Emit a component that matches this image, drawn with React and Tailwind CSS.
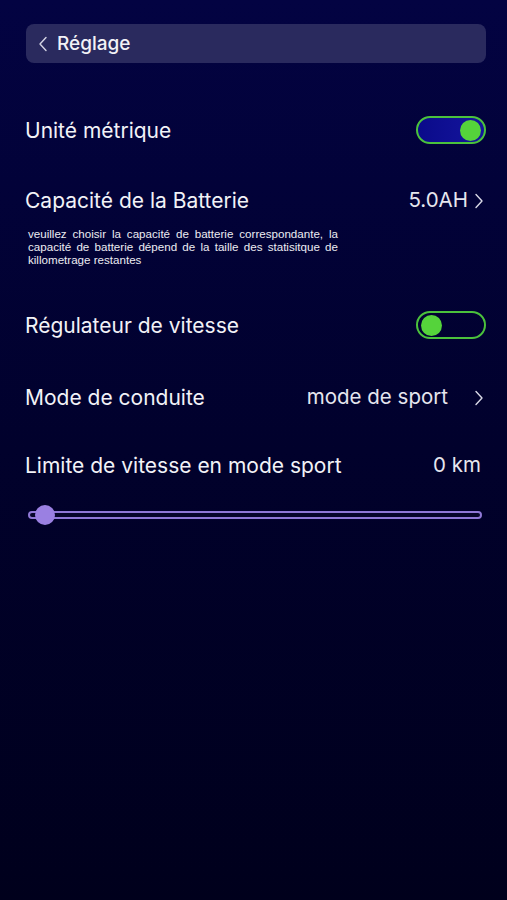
import React, { useState } from 'react';

const Toggle = ({ on, onChange }) => (
  <button
    onClick={() => onChange(!on)}
    className={`flex h-[28px] w-[70px] items-center rounded-full border-2 border-[#4bc23c] px-[3px] ${
      on ? 'justify-end bg-gradient-to-r from-[#0a0a8a] to-[#15159e]' : 'justify-start bg-transparent'
    }`}
  >
    <span className="block h-[21px] w-[21px] rounded-full bg-[#55d33b]" />
  </button>
);

const Chevron = () => (
  <svg width="10" height="16" viewBox="0 0 10 16" fill="none" className="text-[#d9d9e6]">
    <path d="M2 1.5 L8 8 L2 14.5" stroke="currentColor" strokeWidth="1.4" strokeLinecap="round" strokeLinejoin="round" />
  </svg>
);

export default function App() {
  const [metric, setMetric] = useState(true);
  const [cruise, setCruise] = useState(false);
  const [limit, setLimit] = useState(0);

  return (
    <div
      className="min-h-[900px] w-full bg-gradient-to-b from-[#030342] via-[#01012c] to-[#00001c] pl-[26px] pr-[21px] pt-[24px] text-[#f2f2f7]"
      style={{ fontFamily: 'Inter, "Open Sans", sans-serif' }}
    >
      {/* header */}
      <div className="flex h-[39px] items-center gap-[9px] rounded-[8px] bg-[#2a2a5e] pl-[12px]">
        <svg width="10" height="16" viewBox="0 0 10 16" fill="none" className="text-[#d5d5e4]">
          <path d="M8 1.5 L2 8 L8 14.5" stroke="currentColor" strokeWidth="1.4" strokeLinecap="round" strokeLinejoin="round" />
        </svg>
        <span className="text-[19px] font-medium leading-none">Réglage</span>
      </div>

      <div className="mt-[53px] flex items-center justify-between">
        <span className="-ml-[1px] text-[21px] leading-none">Unité métrique</span>
        <Toggle on={metric} onChange={setMetric} />
      </div>

      <div className="mt-[46px] flex items-center justify-between">
        <span className="-ml-[1px] text-[21px] leading-none">Capacité de la Batterie</span>
        <div className="flex items-center gap-[6px] pr-[2px]">
          <span className="text-[20.5px] leading-none text-[#e6e6ee]">5.0AH</span>
          <Chevron />
        </div>
      </div>
      <p
        className="ml-[2px] mt-[16px] w-[310px] text-justify text-[11.6px] leading-[13px] text-[#ececf2]"
        style={{ fontFamily: '"Liberation Sans", Arial, sans-serif' }}
      >
        veuillez choisir la capacité de batterie correspondante, la capacité de batterie dépend de la taille des statisitque de killometrage restantes
      </p>

      <div className="mt-[45px] flex items-center justify-between">
        <span className="-ml-[1px] text-[21px] leading-none">Régulateur de vitesse</span>
        <Toggle on={cruise} onChange={setCruise} />
      </div>

      <div className="mt-[48px] flex items-center justify-between">
        <span className="-ml-[1px] text-[21px] leading-none">Mode de conduite</span>
        <div className="flex items-center gap-[26px] pr-[2px]">
          <span className="text-[20.5px] leading-none text-[#e6e6ee]">mode de sport</span>
          <Chevron />
        </div>
      </div>

      <div className="mt-[47px] flex items-center justify-between">
        <span className="-ml-[1px] text-[21px] leading-none">Limite de vitesse en mode sport</span>
        <span className="pr-[5px] text-[20.5px] leading-none text-[#e6e6ee]">{limit} km</span>
      </div>

      <div className="relative mt-[29px] h-[20px]">
        <div className="absolute left-[2px] right-[4px] top-[6px] h-[8px] rounded-full border-2 border-[#8f78d6] bg-[#06062a]" />
        <div
          className="absolute top-0 h-[20px] w-[20px] rounded-full bg-[#9a80e2]"
          style={{ left: `${9 + (limit / 100) * 430}px` }}
        />
        <input
          type="range"
          min="0"
          max="100"
          value={limit}
          onChange={(e) => setLimit(Number(e.target.value))}
          className="absolute inset-0 w-full opacity-0"
        />
      </div>
    </div>
  );
}
